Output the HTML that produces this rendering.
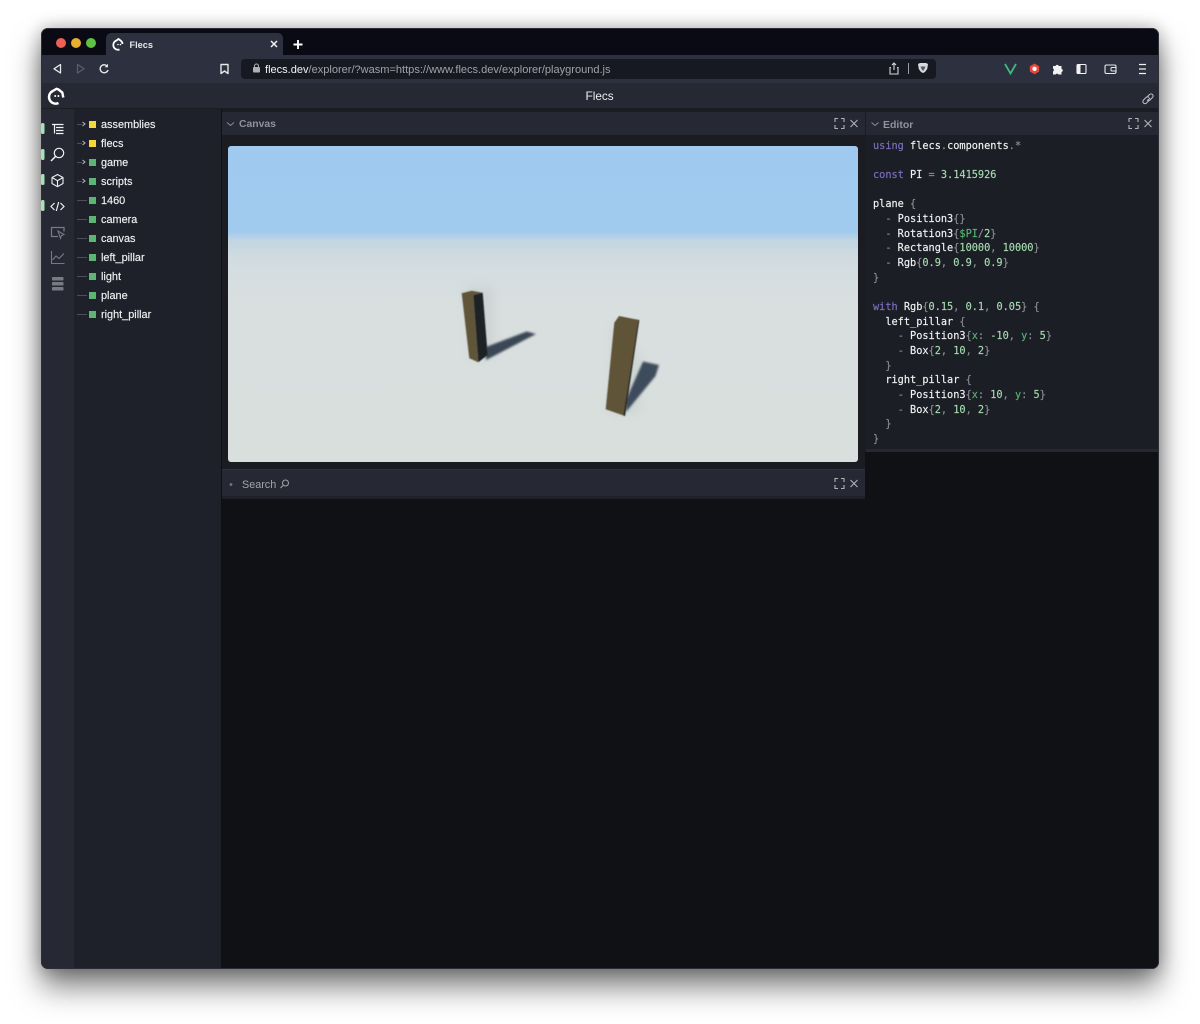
<!DOCTYPE html>
<html><head><meta charset="utf-8"><title>Flecs</title>
<style>
*{box-sizing:border-box;margin:0;padding:0}
html,body{width:1200px;height:1024px;background:#fff;overflow:hidden;font-family:"Liberation Sans",sans-serif}
#page{position:absolute;left:0;top:0;width:1200px;height:1024px;filter:blur(.35px)}
.a{position:absolute}
#win{position:absolute;left:41px;top:28px;width:1118px;height:941px;border-radius:7px;background:#101115;box-shadow:0 18px 30px rgba(0,0,0,.5),0 0 18px rgba(0,0,0,.3);overflow:hidden;outline:1px solid rgba(70,70,80,.55);outline-offset:-1px}
.t{position:absolute;white-space:pre;line-height:14px}
.row{position:absolute;left:101px;color:#f0f1f3;font-size:10.9px;line-height:14px;white-space:pre;-webkit-text-stroke:.15px #f0f1f3}
.sq{position:absolute;left:89px;width:7px;height:7px;margin-top:.6px}
.ln{position:absolute;left:77px;width:10px;height:1px;background:#4b4e57}
.code{position:absolute;left:873px;font:10.25px/14px "DejaVu Sans Mono","Liberation Mono",monospace;color:#f2f3f4;white-space:pre;-webkit-text-stroke:.15px currentColor;margin-top:.4px}
.k{color:#7e6fc0}.g{color:#8b8e95}.n{color:#a6dcb0}.v{color:#57b573}
svg{position:absolute;overflow:visible}
</style></head><body><div id="page">
<div id="win"></div>

<!-- tab strip -->
<div class="a" style="left:42px;top:29px;width:1116px;height:26px;background:#0a0a14;border-radius:6px 6px 0 0"></div>
<div class="a" style="left:56px;top:37.500px;width:10px;height:10px;border-radius:50%;background:#ec5f57"></div>
<div class="a" style="left:71px;top:37.500px;width:10px;height:10px;border-radius:50%;background:#e9ad2f"></div>
<div class="a" style="left:86px;top:37.500px;width:10px;height:10px;border-radius:50%;background:#5ec144"></div>
<div class="a" style="left:106px;top:33px;width:177px;height:22px;background:#2d303e;border-radius:5px 5px 0 0"></div>

<!-- toolbar -->
<div class="a" style="left:42px;top:55px;width:1116px;height:28px;background:#2d303e"></div>
<div class="a" style="left:241px;top:59px;width:695px;height:20px;background:#171922;border-radius:4px"></div>
<svg style="left:0;top:0" width="1200" height="120" viewBox="0 0 1200 120" fill="none">
 <path d="M122.500 44a4.500 4.500 0 0 0-2-3.500l-2-1.500-2 1.500a4.700 4.700 0 0 0 3 9" stroke="#fff" stroke-width="1.800"/><circle cx="118" cy="44.500" r=".8" fill="#fff"/><circle cx="120.500" cy="44.500" r=".8" fill="#fff"/>
 <path d="M271 41l6 6M277 41l-6 6" stroke="#f2f2f2" stroke-width="1.500"/>
 <path d="M298 40v9M293.500 44.500h9" stroke="#fff" stroke-width="1.900"/>
 <path d="M60.500 64.500v8.500l-6.500-4.200z" stroke="#e6e7ea" stroke-width="1.300" stroke-linejoin="round"/>
 <path d="M77.500 64.500v8.500l6.500-4.200z" stroke="#5c5f6b" stroke-width="1.200" stroke-linejoin="round"/>
 <path d="M107.500 66.500a4 4 0 1 0 .5 3.500" stroke="#e6e7ea" stroke-width="1.400"/><path d="M108 63.800v3.400h-3.400z" fill="#e6e7ea"/>
 <path d="M221 64.500h7v9l-3.500-2.500-3.500 2.500z" stroke="#e6e7ea" stroke-width="1.400" stroke-linejoin="round"/>
 <path d="M254.500 67v-1a2 2 0 0 1 4 0v1" stroke="#aeb0b7" stroke-width="1"/><rect x="253" y="67" width="7" height="5.500" rx="1" fill="#aeb0b7"/>
 <path d="M891 67.500h-1v6.500h8v-6.500h-1M894 70v-6.500M892 65l2-2 2 2" stroke="#d6d7db" stroke-width="1.100"/>
 <path d="M908.500 63v11" stroke="#9b9da5" stroke-width="1"/>
 <path d="M918 64l2-1h6l2 1-.8 5-2.200 3-2 1-2-1-2.200-3z" fill="#d8d9de"/><path d="M920.500 66.500h5l-1 2.500-1.500 2-1.500-2z" fill="#555866"/>
 <path d="M1005 64l5.500 9.500 5.500-9.500" stroke="#42b883" stroke-width="1.800"/>
 <path d="M1034.500 63.500l4.700 2.700v5.300l-4.700 2.800-4.700-2.800v-5.300z" fill="#e8473a"/><circle cx="1034.500" cy="68.800" r="2.200" fill="#fff"/>
 <path d="M1053 66h2.500a1.700 1.700 0 0 1 3.300 0h2.700v2.700a1.700 1.700 0 0 1 0 3.300v2.500h-3a1.600 1.600 0 0 0-2.900 0h-2.600v-3a1.700 1.700 0 0 0 0-3z" fill="#f2f2f4"/>
 <rect x="1077" y="64.500" width="9" height="9" rx="1" stroke="#f2f2f4" stroke-width="1.100"/><rect x="1077" y="64.500" width="3.500" height="9" fill="#f2f2f4"/>
 <rect x="1105" y="65" width="11" height="8.500" rx="1.500" stroke="#e8e8ec" stroke-width="1.100"/><rect x="1111" y="67.500" width="5" height="3.500" rx="1" fill="#2d303e" stroke="#e8e8ec"/>
 <path d="M1139 64.500h7M1139 69h7M1139 73.500h7" stroke="#f2f2f4" stroke-width="1.300"/>
</svg>
<div class="t" style="left:265px;top:62.500px;font-size:11.040px;color:#f2f3f5">flecs.dev<span style="color:#a0a2a9">/explorer/?wasm=https://www.flecs.dev/explorer/playground.js</span></div>
<div class="t" style="left:129.500px;top:38px;font-size:9.200px;font-weight:bold;color:#e8e9ec">Flecs</div>

<!-- app header -->
<div class="a" style="left:42px;top:83px;width:1116px;height:26px;background:#262933;border-bottom:1px solid #1a1c22"></div>
<div class="t" style="left:585.500px;top:89px;font-size:11.800px;color:#eceded">Flecs</div>

<!-- rails -->
<div class="a" style="left:42px;top:109px;width:32px;height:859px;background:#262933;border-radius:0 0 0 6px"></div>
<div class="a" style="left:74px;top:109px;width:147px;height:859px;background:#1e2129"></div>
<div class="a" style="left:221px;top:109px;width:937px;height:859px;background:#101115;border-radius:0 0 6px 0"></div>
<div class="a" style="left:222px;top:109px;width:936px;height:3px;background:#1b1d23"></div>
<div class="a" style="left:865px;top:109px;width:1px;height:343px;background:#1b1d23"></div>

<svg style="left:0;top:0" width="1200" height="300" viewBox="0 0 1200 300" fill="none">
 <path d="M63.300 97.500L62.300 92.500L58.500 89.500L56.500 88.800L52.800 91A6.600 6.600 0 0 0 58.500 103" stroke="#fff" stroke-width="2.400"/><circle cx="55.200" cy="96" r="1" fill="#fff"/><circle cx="58.400" cy="96" r="1" fill="#fff"/>
 <g stroke="#b9bbc1" stroke-width="1.100"><path d="M1147 97l2.500-2.500a2 2 0 0 1 3 3l-2.500 2.500a2 2 0 0 1-3 0"/><path d="M1150 98l-2.500 2.500"/><path d="M1149 100.500l-2.500 2.500a2 2 0 0 1-3-3l2.500-2.500a2 2 0 0 1 3 0"/></g>
 <g fill="#a9e0b6"><rect x="41" y="123" width="3.500" height="11" rx="1.500"/><rect x="41" y="149" width="3.500" height="11" rx="1.500"/><rect x="41" y="174" width="3.500" height="11" rx="1.500"/><rect x="41" y="200" width="3.500" height="11" rx="1.500"/></g>
 <path d="M52 124.500h11.500M56 127.500h7.500M56 130.500h7.500M56 133.500h7.500M54.500 124.500v9" stroke="#eef0f2" stroke-width="1.200"/>
 <circle cx="59" cy="153" r="4.700" stroke="#eef0f2" stroke-width="1.200"/><path d="M55.500 156.500l-4.500 4.500" stroke="#eef0f2" stroke-width="1.500"/>
 <path d="M57.500 174.500l5.500 3v6l-5.500 3.200-5.500-3.200v-6zM52 177.500l5.500 3.200 5.500-3.200M57.500 180.700v6" stroke="#eef0f2" stroke-width="1.100" stroke-linejoin="round"/>
 <path d="M54.500 203l-3.500 3.500 3.500 3.500M60.500 203l3.500 3.500-3.500 3.500M58.700 202l-2.400 9" stroke="#eef0f2" stroke-width="1.200"/>
 <path d="M58 236.500h-6.500v-9h12.500v4" stroke="#777a83" stroke-width="1.300"/><path d="M58 231l6 3.500-2.500 1-1 2.800z" stroke="#777a83" stroke-width="1.100"/>
 <path d="M51.500 251v12.500h13M52.500 260l3.500-4 3 2.500 5-5" stroke="#777a83" stroke-width="1.100"/>
 <g fill="#777a83"><rect x="52" y="277" width="11.500" height="3.500" rx=".8"/><rect x="52" y="282" width="11.500" height="3.500" rx=".8"/><rect x="52" y="287" width="11.500" height="3.500" rx=".8"/></g>
 <g stroke="#b7b9bf" stroke-width="1"><path d="M82.500 122l2.500 2-2.500 2M82.500 141l2.500 2-2.500 2M82.500 160l2.500 2-2.500 2M82.500 179l2.500 2-2.500 2"/></g>
</svg>
<div class="ln" style="top:124px;width:5px"></div><div class="ln" style="top:143px;width:5px"></div><div class="ln" style="top:162px;width:5px"></div><div class="ln" style="top:181px;width:5px"></div>
<div class="ln" style="top:200px"></div><div class="ln" style="top:219px"></div><div class="ln" style="top:238px"></div><div class="ln" style="top:257px"></div><div class="ln" style="top:276px"></div><div class="ln" style="top:295px"></div><div class="ln" style="top:314px"></div>
<div class="sq" style="top:120px;background:#f5d63d"></div><div class="sq" style="top:139px;background:#f5d63d"></div>
<div class="sq" style="top:158px;background:#5cb573"></div><div class="sq" style="top:177px;background:#5cb573"></div><div class="sq" style="top:196px;background:#5cb573"></div><div class="sq" style="top:215px;background:#5cb573"></div><div class="sq" style="top:234px;background:#5cb573"></div><div class="sq" style="top:253px;background:#5cb573"></div><div class="sq" style="top:272px;background:#5cb573"></div><div class="sq" style="top:291px;background:#5cb573"></div><div class="sq" style="top:310px;background:#5cb573"></div>
<div class="row" style="top:117.500px">assemblies</div><div class="row" style="top:136.500px">flecs</div><div class="row" style="top:155.500px">game</div><div class="row" style="top:174.500px">scripts</div><div class="row" style="top:193.500px">1460</div><div class="row" style="top:212.500px">camera</div><div class="row" style="top:231.500px">canvas</div><div class="row" style="top:250.500px">left_pillar</div><div class="row" style="top:269.500px">light</div><div class="row" style="top:288.500px">plane</div><div class="row" style="top:307.500px">right_pillar</div>

<!-- canvas panel -->
<div class="a" style="left:222px;top:112px;width:643px;height:23px;background:#262933"></div>
<div class="a" style="left:222px;top:135px;width:643px;height:334px;background:#1a1c22"></div>
<div class="t" style="left:239px;top:117.500px;font-size:10.400px;font-weight:bold;color:#90939b">Canvas</div>
<svg style="left:228px;top:146px;border-radius:3px;overflow:hidden;" width="630" height="316" viewBox="228 146 630 316">
 <defs>
 <linearGradient id="bg" x1="0" y1="0" x2="0" y2="1"><stop offset="0" stop-color="#a0c9f0"/><stop offset=".27" stop-color="#a1caef"/><stop offset=".30" stop-color="#c2d5e2"/><stop offset=".36" stop-color="#d2dcdf"/><stop offset=".5" stop-color="#d9dfdf"/><stop offset="1" stop-color="#d9dfdc"/></linearGradient>
 <filter id="b" x="-20%" y="-20%" width="140%" height="140%"><feGaussianBlur stdDeviation="1"/></filter>
 <filter id="b2" x="-30%" y="-30%" width="160%" height="160%"><feGaussianBlur stdDeviation="5"/></filter>
 <filter id="s" x="-10%" y="-10%" width="120%" height="120%"><feGaussianBlur stdDeviation=".45"/></filter>
 </defs>
 <rect x="228" y="146" width="630" height="316" fill="url(#bg)"/>
 <path d="M472 360l22-3 0-70-30 0z" fill="#b9c2c1" opacity=".4" filter="url(#b2)"/>
 <path d="M608 414l30 0 6-50-30-40z" fill="#b9c2c1" opacity=".35" filter="url(#b2)"/>
 <path d="M486 347L526.700 331.500L536 334L486 360z" fill="#3b4654" filter="url(#b)"/>
 <path d="M626 400L643 361.500L659 365L655.500 376L626 412z" fill="#3d4b5c" filter="url(#b)"/>
 <g filter="url(#s)">
 <path d="M461.700 293.300L471.700 290.700L482.700 292.700L473.300 295L478.300 362.300L469.300 358.300z" fill="#615439"/>
 <path d="M473.300 295L482.700 292.700L487.700 355L478.300 362.300z" fill="#1f2327"/>
 <path d="M614.300 322.700L619 316L639.300 320L625 416L605.700 409.300z" fill="#5f5239"/>
 <path d="M639.300 320L625 416L623.500 415.500L638.300 320.500z" fill="#1f2327"/>
 </g>
</svg>

<!-- search panel -->
<div class="a" style="left:222px;top:469px;width:643px;height:30px;background:#262933;border-top:1px solid #2f323d;border-bottom:3px solid #1f2128"></div>
<div class="t" style="left:242px;top:478px;font-size:10.800px;color:#a3a5ab">Search</div>

<!-- editor -->
<div class="a" style="left:866px;top:112px;width:292px;height:23px;background:#262933"></div>
<div class="a" style="left:866px;top:135px;width:292px;height:314px;background:#1c1e25"></div>
<div class="a" style="left:866px;top:449px;width:292px;height:3px;background:#262933"></div>
<div class="t" style="left:883px;top:117.500px;font-size:10.500px;font-weight:bold;color:#90939b">Editor</div>

<svg style="left:0;top:0" width="1200" height="500" viewBox="0 0 1200 500" fill="none">
 <path d="M227 122.500l3.500 3 3.500-3M871.500 122.500l3.500 3 3.500-3" stroke="#8a8d95" stroke-width="1"/>
 <circle cx="231" cy="484.500" r="1.400" fill="#777a83"/>
 <circle cx="285.500" cy="483" r="3" stroke="#a3a5ab" stroke-width="1"/><path d="M283 485.500l-2.500 2.500" stroke="#a3a5ab" stroke-width="1.100"/>
 <g stroke="#b0b2b8" stroke-width="1.100">
 <path d="M835 122v-3.500h3M841 118.500h3v3.500M844 125v3.500h-3M838 128.500h-3v-3.500"/>
 <path d="M850.500 120l7 7M857.500 120l-7 7"/>
 <path d="M835 482v-3.500h3M841 478.500h3v3.500M844 485v3.500h-3M838 488.500h-3v-3.500"/>
 <path d="M850.500 480l7 7M857.500 480l-7 7"/>
 <path d="M1129 122v-3.500h3M1135 118.500h3v3.500M1138 125v3.500h-3M1132 128.500h-3v-3.500"/>
 <path d="M1144.500 120l7 7M1151.500 120l-7 7"/>
 </g>
</svg>

<div class="code" style="top:138.500px"><span class="k">using</span> flecs<span class="g">.</span>components<span class="g">.*</span></div>
<div class="code" style="top:167.800px"><span class="k">const</span> PI <span class="g">=</span> <span class="n">3.1415926</span></div>
<div class="code" style="top:197.100px">plane <span class="g">{</span></div>
<div class="code" style="top:211.700px">  <span class="g">-</span> Position3<span class="g">{}</span></div>
<div class="code" style="top:226.400px">  <span class="g">-</span> Rotation3<span class="g">{</span><span class="v">$PI</span><span class="g">/</span><span class="n">2</span><span class="g">}</span></div>
<div class="code" style="top:241px">  <span class="g">-</span> Rectangle<span class="g">{</span><span class="n">10000</span><span class="g">,</span> <span class="n">10000</span><span class="g">}</span></div>
<div class="code" style="top:255.700px">  <span class="g">-</span> Rgb<span class="g">{</span><span class="n">0.9</span><span class="g">,</span> <span class="n">0.9</span><span class="g">,</span> <span class="n">0.9</span><span class="g">}</span></div>
<div class="code" style="top:270.300px"><span class="g">}</span></div>
<div class="code" style="top:299.600px"><span class="k">with</span> Rgb<span class="g">{</span><span class="n">0.15</span><span class="g">,</span> <span class="n">0.1</span><span class="g">,</span> <span class="n">0.05</span><span class="g">}</span> <span class="g">{</span></div>
<div class="code" style="top:314.300px">  left_pillar <span class="g">{</span></div>
<div class="code" style="top:328.900px">    <span class="g">-</span> Position3<span class="g">{</span><span class="v">x</span><span class="g">:</span> <span class="n">-10</span><span class="g">,</span> <span class="v">y</span><span class="g">:</span> <span class="n">5</span><span class="g">}</span></div>
<div class="code" style="top:343.600px">    <span class="g">-</span> Box<span class="g">{</span><span class="n">2</span><span class="g">,</span> <span class="n">10</span><span class="g">,</span> <span class="n">2</span><span class="g">}</span></div>
<div class="code" style="top:358.200px">  <span class="g">}</span></div>
<div class="code" style="top:372.900px">  right_pillar <span class="g">{</span></div>
<div class="code" style="top:387.500px">    <span class="g">-</span> Position3<span class="g">{</span><span class="v">x</span><span class="g">:</span> <span class="n">10</span><span class="g">,</span> <span class="v">y</span><span class="g">:</span> <span class="n">5</span><span class="g">}</span></div>
<div class="code" style="top:402.200px">    <span class="g">-</span> Box<span class="g">{</span><span class="n">2</span><span class="g">,</span> <span class="n">10</span><span class="g">,</span> <span class="n">2</span><span class="g">}</span></div>
<div class="code" style="top:416.800px">  <span class="g">}</span></div>
<div class="code" style="top:431.500px"><span class="g">}</span></div>
</div></body></html>
